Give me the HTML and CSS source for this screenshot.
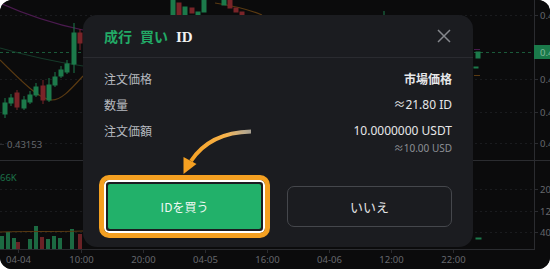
FILE: index.html
```html
<!DOCTYPE html>
<html lang="ja">
<head>
<meta charset="utf-8">
<title>成行 買い ID</title>
<link rel="stylesheet" href="styles.css">
</head>
<body>
<div class="frame">
  <svg class="chart" width="550" height="269" viewBox="0 0 550 269">
    <rect x="0" y="0" width="550" height="269" fill="#0b0b0c"/>
    <g stroke="#1a1b1e" stroke-width="1" stroke-dasharray="2 3">
      <line x1="0" y1="15.5" x2="534" y2="15.5"/>
      <line x1="0" y1="79.5" x2="534" y2="79.5"/>
      <line x1="0" y1="112.5" x2="534" y2="112.5"/>
      <line x1="0" y1="143.5" x2="534" y2="143.5"/>
      <line x1="0" y1="189.5" x2="534" y2="189.5"/>
      <line x1="0" y1="211.5" x2="534" y2="211.5"/>
      <line x1="0" y1="232.5" x2="534" y2="232.5"/>
    </g>
    <g stroke="#2b2c30" stroke-width="1">
      <line x1="534.5" y1="0" x2="534.5" y2="249"/>
      <line x1="0" y1="160.5" x2="550" y2="160.5"/>
      <line x1="0" y1="249.5" x2="535" y2="249.5"/>
      <line x1="534" y1="15.5" x2="538" y2="15.5"/>
      <line x1="534" y1="79.5" x2="538" y2="79.5"/>
      <line x1="534" y1="112.5" x2="538" y2="112.5"/>
      <line x1="534" y1="143.5" x2="538" y2="143.5"/>
      <line x1="534" y1="189.5" x2="538" y2="189.5"/>
      <line x1="534" y1="211.5" x2="538" y2="211.5"/>
      <line x1="534" y1="232.5" x2="538" y2="232.5"/>
      <line x1="18.5" y1="249" x2="18.5" y2="253"/>
      <line x1="81.5" y1="249" x2="81.5" y2="253"/>
      <line x1="143.5" y1="249" x2="143.5" y2="253"/>
      <line x1="205.5" y1="249" x2="205.5" y2="253"/>
      <line x1="267.5" y1="249" x2="267.5" y2="253"/>
      <line x1="329.5" y1="249" x2="329.5" y2="253"/>
      <line x1="391.5" y1="249" x2="391.5" y2="253"/>
      <line x1="453.5" y1="249" x2="453.5" y2="253"/>
      <line x1="0" y1="144.5" x2="4" y2="144.5"/>
    </g>
    <path d="M0 3 C20 12 45 22 83 30" stroke="#4a1a4e" stroke-width="1.2" fill="none"/>
    <path d="M0 48 C25 55 55 62 83 66" stroke="#163a2a" stroke-width="1.2" fill="none"/>
    <path d="M0 60 C20 80 40 100 52 100 C62 100 72 88 83 76" stroke="#5a3a12" stroke-width="1.2" fill="none"/>
    <line x1="0" y1="52.5" x2="534" y2="52.5" stroke="#1b5a3a" stroke-width="1" stroke-dasharray="3 3"/>
    <path d="M215 3 C235 6 250 10 262 15" stroke="#5a3a12" stroke-width="1.2" fill="none"/>
    <g fill="#1c7a4b" stroke="#1c7a4b" stroke-width="1">
      <line x1="5" y1="98" x2="5" y2="118"/><rect x="3" y="103" width="4" height="11"/>
      <line x1="11" y1="94" x2="11" y2="106"/><rect x="9" y="98" width="4" height="5"/>
      <line x1="24" y1="96" x2="24" y2="110"/><rect x="22" y="100" width="4" height="8"/>
      <line x1="30" y1="91" x2="30" y2="104"/><rect x="28" y="95" width="4" height="7"/>
      <line x1="36" y1="83" x2="36" y2="97"/><rect x="34" y="87" width="4" height="8"/>
      <line x1="49" y1="78" x2="49" y2="102"/><rect x="47" y="85" width="4" height="15"/>
      <line x1="55" y1="72" x2="55" y2="87"/><rect x="53" y="77" width="4" height="8"/>
      <line x1="61" y1="66" x2="61" y2="78"/><rect x="59" y="70" width="4" height="6"/>
      <line x1="67" y1="60" x2="67" y2="74"/><rect x="65" y="64" width="4" height="8"/>
      <line x1="74" y1="23" x2="74" y2="73"/><rect x="72" y="33" width="4" height="31"/>
      <rect x="171" y="0" width="4" height="15"/>
      <rect x="183" y="7" width="4" height="8"/>
      <rect x="196" y="12" width="4" height="3"/>
      <rect x="202" y="0" width="4" height="12"/>
      <rect x="222" y="0" width="4" height="5"/>
      <line x1="384" y1="11" x2="384" y2="15"/>
      <rect x="476" y="52" width="4" height="6"/>
      <rect x="474" y="67" width="4" height="1"/>
      <rect x="476" y="238" width="5" height="1"/>
    </g>
    <g fill="#7a2429" stroke="#7a2429" stroke-width="1">
      <line x1="17" y1="90" x2="17" y2="110"/><rect x="15" y="93" width="4" height="14"/>
      <line x1="43" y1="80" x2="43" y2="104"/><rect x="41" y="86" width="4" height="14"/>
      <line x1="80" y1="29" x2="80" y2="50"/><rect x="78" y="33" width="4" height="10"/>
      <rect x="177" y="3" width="4" height="12"/>
      <rect x="190" y="8" width="4" height="5"/>
      <rect x="228" y="0" width="4" height="8"/>
      <rect x="234" y="8" width="4" height="4"/>
      <rect x="240" y="12" width="4" height="3"/>
    </g>
    <line x1="474" y1="49.5" x2="480" y2="49.5" stroke="#4a1a4e"/>
    <line x1="474" y1="75.5" x2="480" y2="75.5" stroke="#5a3a12"/>
    <g fill="#1c6a42">
      <rect x="0" y="236" width="4" height="13"/>
      <rect x="6" y="232" width="4" height="17"/>
      <rect x="12" y="238" width="4" height="11"/>
      <rect x="28" y="239" width="4" height="10"/>
      <rect x="34" y="226" width="4" height="23"/>
      <rect x="46" y="239" width="4" height="10"/>
      <rect x="52" y="236" width="4" height="13"/>
      <rect x="58" y="238" width="4" height="11"/>
      <rect x="70" y="229" width="4" height="20"/>
    </g>
    <g fill="#6a2226">
      <rect x="16" y="242" width="4" height="7"/>
      <rect x="40" y="237" width="4" height="12"/>
      <rect x="78" y="234" width="4" height="15"/>
    </g>
    <path d="M0 232 C30 231 60 232 83 231" stroke="#5a3a12" stroke-width="1" fill="none"/>
    <rect x="534" y="45" width="16" height="14" fill="#1a7a4a"/>
    <g font-family="Noto Sans, sans-serif" font-size="9.5" fill="#66686d">
      <text x="540" y="18.5">0.4</text>
      <text x="540" y="82.5">0.4</text>
      <text x="540" y="115.5">0.4</text>
      <text x="540" y="146.5">0.4</text>
      <text x="540" y="192.5">20</text>
      <text x="540" y="214.5">12</text>
      <text x="540" y="235.5">40</text>
      <text x="7" y="148">0.43153</text>
      <text x="0" y="181" fill="#1c7048">66K</text>
      <text x="18.5" y="263" text-anchor="middle">04-04</text>
      <text x="81.5" y="263" text-anchor="middle">10:00</text>
      <text x="143.5" y="263" text-anchor="middle">20:00</text>
      <text x="205.5" y="263" text-anchor="middle">04-05</text>
      <text x="267.5" y="263" text-anchor="middle">16:00</text>
      <text x="329.5" y="263" text-anchor="middle">04-06</text>
      <text x="391.5" y="263" text-anchor="middle">12:00</text>
      <text x="453.5" y="263" text-anchor="middle">22:00</text>
    </g>
    <text x="540" y="55.5" font-family="Noto Sans, sans-serif" font-size="9.5" fill="#7fb99a">0.4</text>
  </svg>

  <div class="modal">
    <div class="modal-head">
      <h2 class="title"><span class="side">成行</span><span class="side">買い</span><span class="asset">ID</span></h2>
      <button class="close" aria-label="閉じる">
        <svg width="14" height="14" viewBox="0 0 14 14"><path d="M1 1 L13 13 M13 1 L1 13" stroke="#85878c" stroke-width="1.5" fill="none"/></svg>
      </button>
    </div>
    <div class="modal-body">
      <div class="row"><span class="label">注文価格</span><span class="value strong">市場価格</span></div>
      <div class="row"><span class="label">数量</span><span class="value">≈21.80 ID</span></div>
      <div class="row"><span class="label">注文価額</span>
        <div class="value-col"><span class="value">10.0000000 USDT</span><span class="sub">≈10.00 USD</span></div>
      </div>
      <div class="actions">
        <div class="highlight"><button class="btn primary">IDを買う</button></div>
        <button class="btn secondary">いいえ</button>
      </div>
    </div>
  </div>

  <svg class="arrow" width="80" height="50" viewBox="175 128 80 50">
    <defs>
      <linearGradient id="ag" x1="252" y1="132" x2="190" y2="165" gradientUnits="userSpaceOnUse">
        <stop offset="0" stop-color="#fff4dc" stop-opacity="0.6"/>
        <stop offset="0.35" stop-color="#f7b24a"/>
        <stop offset="1" stop-color="#f5a021"/>
      </linearGradient>
    </defs>
    <path d="M251 131.5 C228 132 205 140 191 161" stroke="url(#ag)" stroke-width="4" fill="none" stroke-linecap="butt"/>
    <polygon points="196.5,164 183.5,157 183.5,174" fill="#f5a021"/>
  </svg>
</div>
</body>
</html>
```

FILE: styles.css
```css
* { box-sizing: border-box; }
html, body { margin: 0; padding: 0; background: #ffffff; }
body { font-family: "Noto Sans", "Noto Sans CJK JP", sans-serif; }

.frame {
  position: relative;
  width: 550px;
  height: 269px;
  border-radius: 12px;
  overflow: hidden;
  background: #0b0b0c;
}
.chart { display: block; }

.modal {
  position: absolute;
  left: 83px;
  top: 15px;
  width: 390px;
  height: 232px;
  background: #1b1c20;
  border-radius: 14px;
  display: flex;
  flex-direction: column;
}
.modal-head {
  height: 43px;
  padding: 0 22px 0 21px;
  display: flex;
  align-items: center;
  justify-content: space-between;
  border-bottom: 1px solid #2a2b30;
}
.title {
  margin: 0;
  display: flex;
  align-items: baseline;
  gap: 8px;
  font-size: 14px;
  font-weight: 700;
  line-height: 18px;
  font-family: "Noto Sans CJK JP", sans-serif;
  color: #f2f2f2;
}
.side { color: #22aa66; }
.asset { font-family: "Liberation Serif", serif; font-weight: 700; font-size: 15px; }
.close {
  background: none;
  border: 0;
  padding: 0;
  width: 14px;
  height: 14px;
  display: flex;
}

.modal-body {
  padding: 13px 21px 0 21px;
  display: flex;
  flex-direction: column;
  gap: 10px;
}
.row {
  display: flex;
  justify-content: space-between;
  align-items: flex-start;
  line-height: 16px;
}
.label {
  font-family: "Noto Sans CJK JP", sans-serif;
  font-size: 12px;
  color: #b6b9bf;
}
.value {
  font-family: "Noto Sans", "Noto Sans CJK JP", sans-serif;
  font-size: 12px;
  color: #e6e7e9;
}
.value.strong { font-weight: 700; font-family: "Noto Sans CJK JP", sans-serif; }
.value-col {
  display: flex;
  flex-direction: column;
  align-items: flex-end;
}
.sub {
  margin-top: 3px;
  font-size: 10px;
  line-height: 13px;
  color: #8d9096;
}

.actions {
  margin-top: 10px;
  margin-left: -5px;
  display: flex;
  justify-content: space-between;
  align-items: center;
}
.highlight {
  width: 171px;
  height: 63px;
  border: 5px solid #f4a021;
  border-radius: 10px;
  padding: 4px;
  box-shadow: inset 0 0 0 2px #ffffff;
  display: flex;
}
.btn {
  font-family: "Noto Sans CJK JP", sans-serif;
  font-size: 12px;
  border: 0;
  cursor: pointer;
}
.primary {
  flex: 1;
  background: #22b16a;
  color: #eef8f2;
  border-radius: 2px;
}
.secondary {
  width: 165px;
  height: 41px;
  background: transparent;
  border: 1px solid #45474c;
  border-radius: 7px;
  color: #e3e4e6;
  font-size: 13px;
}

.arrow {
  position: absolute;
  left: 175px;
  top: 128px;
}
```
